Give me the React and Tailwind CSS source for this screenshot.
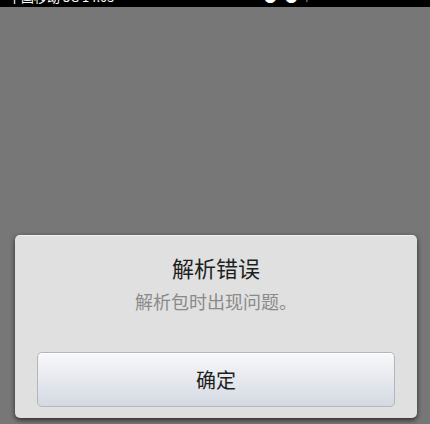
export default function App() {
  return (
    <div
      className="w-[430px] h-[424px] flex flex-col bg-[#777777] overflow-hidden"
      style={{ fontFamily: '"Noto Sans CJK SC", "Noto Sans", sans-serif' }}
    >
      {/* status bar, mostly cropped */}
      <div className="h-[7px] bg-black overflow-hidden flex justify-between pl-[8px] text-white text-[13px] leading-[13px]">
        <span className="-mt-[10px]">中国移动 3G 14:05</span>
        <span className="-mt-[10px] mr-[122px] flex gap-[8px]">
          <span>●</span>
          <span>●</span>
          <span className="text-[8px]">|</span>
        </span>
      </div>

      <div className="flex-1 flex flex-col justify-end pb-[6px]">
        <div className="ml-[15px] w-[402px] h-[183px] rounded-[5px] bg-[#e0e0e0] border-t border-[#f2f2f2] shadow-[0_2px_5px_rgba(0,0,0,0.65)] flex flex-col items-center pt-[17px] px-[22px]">
          <h1 className="text-[22px] leading-[28px] text-[#1e1e1e]">解析错误</h1>
          <p className="mt-[8px] text-[18px] leading-[24px] text-[#8a8a8a]">解析包时出现问题。</p>
          <button className="mt-[39px] w-full h-[55px] rounded-[5px] border border-[#b3b6bb] bg-gradient-to-b from-[#f8f8fa] to-[#d4d9e2] text-[20px] text-[#1e1e1e] shadow-[inset_0_1px_0_#ffffff]">
            确定
          </button>
        </div>
      </div>
    </div>
  );
}
